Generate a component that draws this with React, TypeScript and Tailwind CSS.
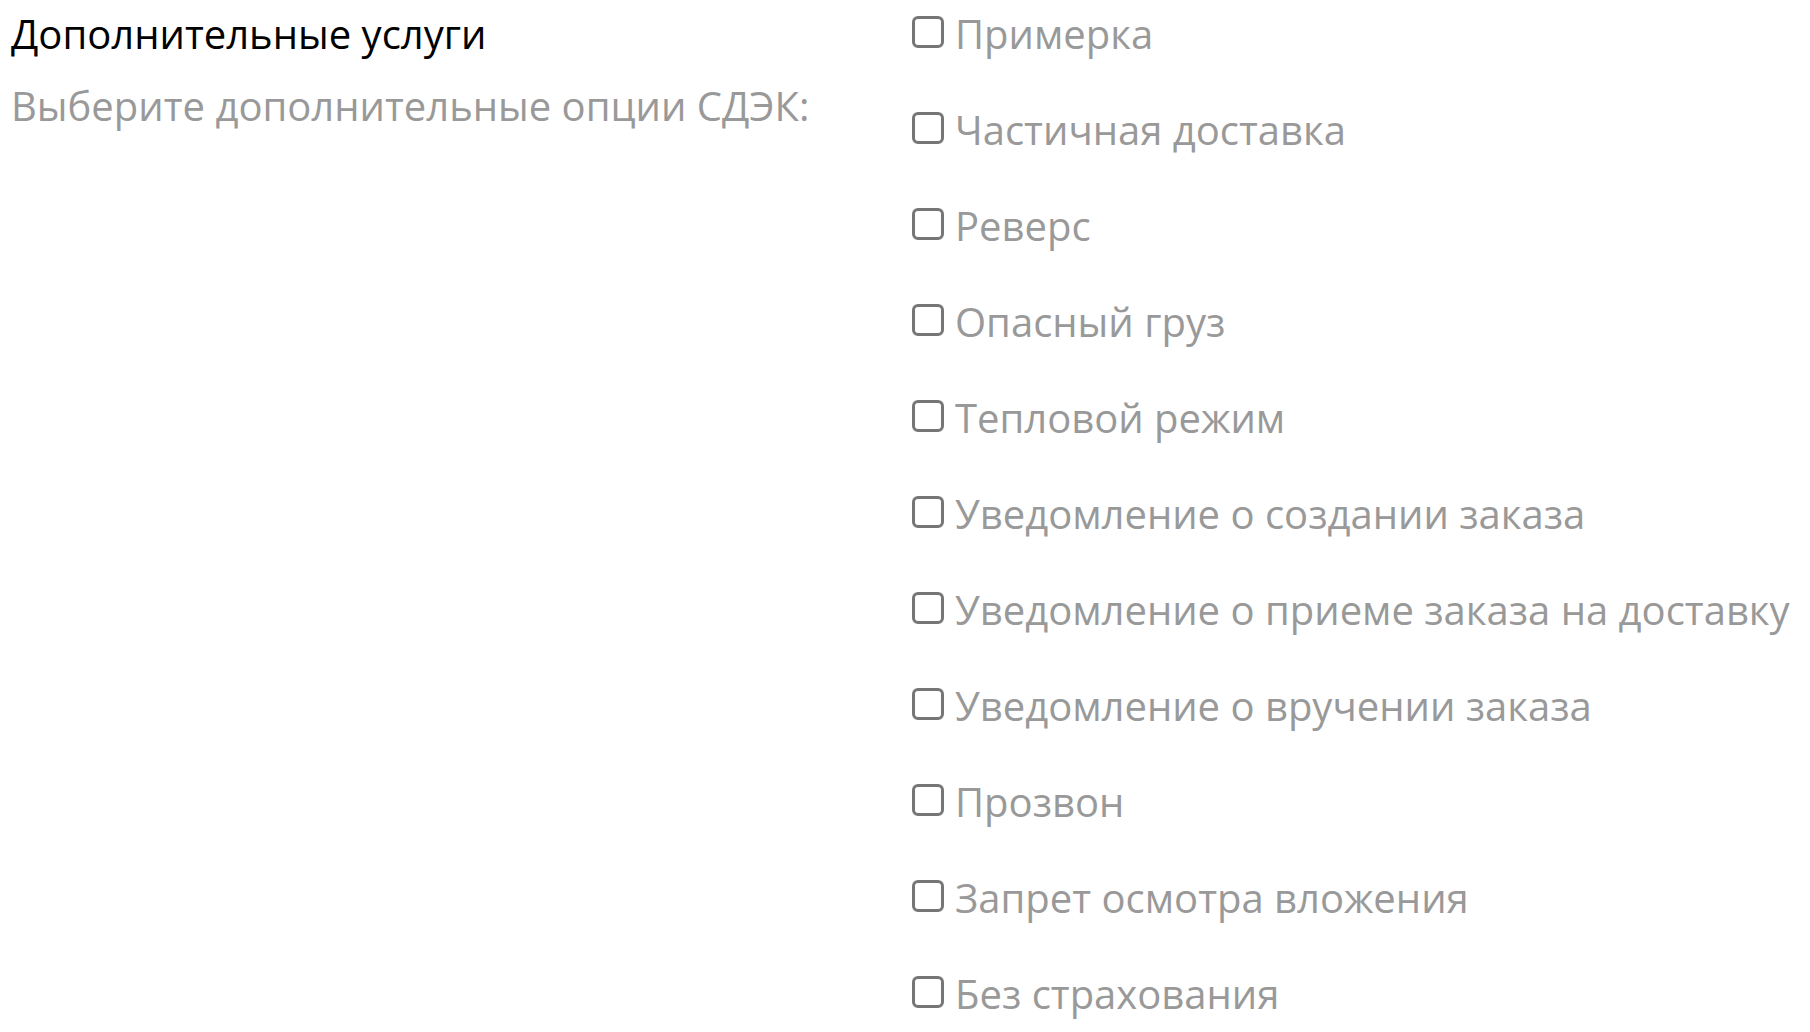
const options = [
  "Примерка",
  "Частичная доставка",
  "Реверс",
  "Опасный груз",
  "Тепловой режим",
  "Уведомление о создании заказа",
  "Уведомление о приеме заказа на доставку",
  "Уведомление о вручении заказа",
  "Прозвон",
  "Запрет осмотра вложения",
  "Без страхования",
];

export default function App() {
  return (
    <div className="flex bg-white" style={{ fontFamily: "'Open Sans', sans-serif" }}>
      <div className="w-[900px] shrink-0 pl-[11px]">
        <h3 className="mt-[8px] text-[40px] leading-[52px] text-black">Дополнительные услуги</h3>
        <p className="mt-[20px] text-[40px] leading-[52px] text-[#999999]">
          Выберите дополнительные опции СДЭК:
        </p>
      </div>
      <div className="flex flex-col pl-[12px]">
        {options.map((label) => (
          <label key={label} className="flex h-[96px] items-start">
            <span className="mt-[16px] h-[32px] w-[32px] shrink-0 rounded-[6px] border-[3px] border-[#767676] bg-white" />
            <span className="ml-[11px] mt-[2px] text-[40px] leading-[64px] text-[#999999]">{label}</span>
          </label>
        ))}
      </div>
    </div>
  );
}
